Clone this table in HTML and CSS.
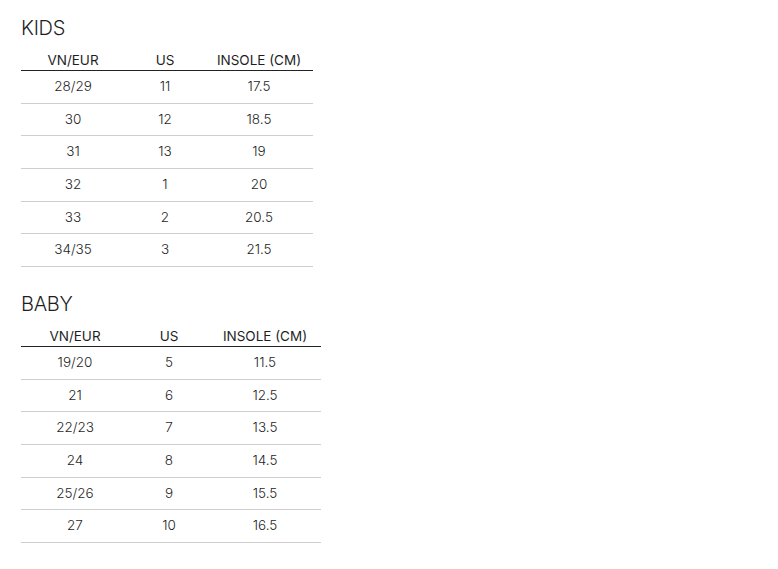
FILE: index.html
```html
<!DOCTYPE html>
<html lang="en">
<head>
<meta charset="utf-8">
<title>Size chart</title>
<link rel="stylesheet" href="styles.css">
</head>
<body>
<section class="chart chart-kids">
  <h2 class="chart-title">KIDS</h2>
  <table class="size-table">
    <colgroup><col class="c1"><col class="c2"><col class="c3"></colgroup>
    <thead><tr><th>VN/EUR</th><th>US</th><th>INSOLE (CM)</th></tr></thead>
    <tbody>
      <tr><td>28/29</td><td>11</td><td>17.5</td></tr>
      <tr><td>30</td><td>12</td><td>18.5</td></tr>
      <tr><td>31</td><td>13</td><td>19</td></tr>
      <tr><td>32</td><td>1</td><td>20</td></tr>
      <tr><td>33</td><td>2</td><td>20.5</td></tr>
      <tr><td>34/35</td><td>3</td><td>21.5</td></tr>
    </tbody>
  </table>
</section>
<section class="chart chart-baby">
  <h2 class="chart-title">BABY</h2>
  <table class="size-table">
    <colgroup><col class="c1"><col class="c2"><col class="c3"></colgroup>
    <thead><tr><th>VN/EUR</th><th>US</th><th>INSOLE (CM)</th></tr></thead>
    <tbody>
      <tr><td>19/20</td><td>5</td><td>11.5</td></tr>
      <tr><td>21</td><td>6</td><td>12.5</td></tr>
      <tr><td>22/23</td><td>7</td><td>13.5</td></tr>
      <tr><td>24</td><td>8</td><td>14.5</td></tr>
      <tr><td>25/26</td><td>9</td><td>15.5</td></tr>
      <tr><td>27</td><td>10</td><td>16.5</td></tr>
    </tbody>
  </table>
</section>
</body>
</html>
```
FILE: styles.css
```css
html, body {
  margin: 0;
  padding: 0;
  background: #fff;
}
body {
  padding: 16px 21px 0;
  font-family: Inter, "Liberation Sans", sans-serif;
  color: #1f1f1f;
}
.chart-title {
  margin: 0 0 12px;
  font-size: 20px;
  line-height: 24px;
  font-weight: 300;
  letter-spacing: -0.3px;
}
.chart-baby {
  margin-top: 25px;
}
.size-table {
  border-collapse: collapse;
  table-layout: fixed;
}
.chart-kids .size-table { width: 292px; }
.chart-kids .c1 { width: 104px; }
.chart-kids .c2 { width: 80px; }
.chart-kids .c3 { width: 108px; }
.chart-baby .size-table { width: 300px; }
.chart-baby .c1 { width: 108px; }
.chart-baby .c2 { width: 80px; }
.chart-baby .c3 { width: 112px; }
.size-table th {
  font-size: 13.5px;
  font-weight: 400;
  line-height: 16px;
  padding: 0 0 2px;
  text-align: center;
  border-bottom: 1px solid #222;
}
.size-table td {
  font-size: 13.5px;
  font-weight: 300;
  line-height: 31.67px;
  padding: 0;
  text-align: center;
  border-bottom: 1px solid #cfcfcf;
}
```
